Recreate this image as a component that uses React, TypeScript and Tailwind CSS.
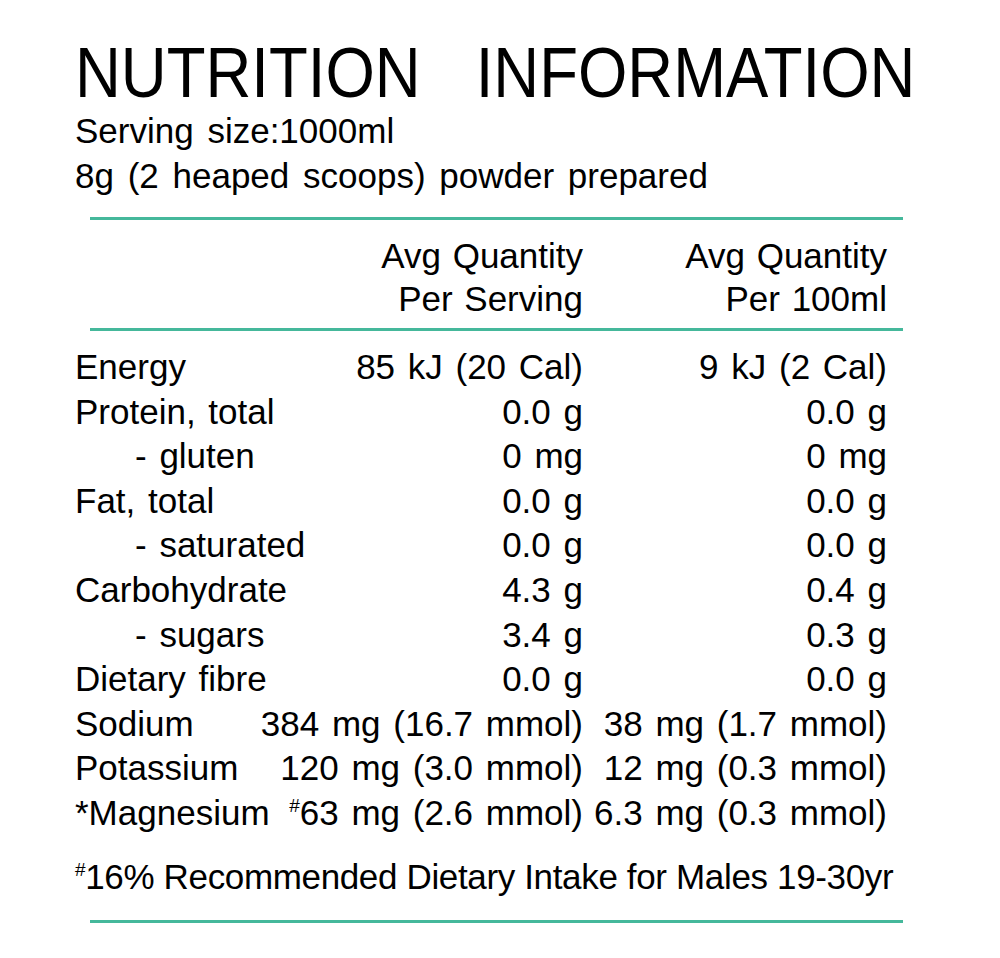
const rows: { label: string; sub?: boolean; serving: React.ReactNode; per100: string }[] = [
  { label: 'Energy', serving: '85 kJ (20 Cal)', per100: '9 kJ (2 Cal)' },
  { label: 'Protein, total', serving: '0.0 g', per100: '0.0 g' },
  { label: '- gluten', sub: true, serving: '0 mg', per100: '0 mg' },
  { label: 'Fat, total', serving: '0.0 g', per100: '0.0 g' },
  { label: '- saturated', sub: true, serving: '0.0 g', per100: '0.0 g' },
  { label: 'Carbohydrate', serving: '4.3 g', per100: '0.4 g' },
  { label: '- sugars', sub: true, serving: '3.4 g', per100: '0.3 g' },
  { label: 'Dietary fibre', serving: '0.0 g', per100: '0.0 g' },
  { label: 'Sodium', serving: '384 mg (16.7 mmol)', per100: '38 mg (1.7 mmol)' },
  { label: 'Potassium', serving: '120 mg (3.0 mmol)', per100: '12 mg (0.3 mmol)' },
  {
    label: '*Magnesium',
    serving: (
      <>
        <span className="relative -top-[13px] text-[19px] leading-none">#</span>63 mg (2.6 mmol)
      </>
    ),
    per100: '6.3 mg (0.3 mmol)',
  },
];

const Rule = ({ className = '' }: { className?: string }) => <div className={`ml-[90px] h-[3px] w-[813px] bg-[#45b89b] ${className}`} />;

export default function App() {
  return (
    <div className="h-[958px] w-[1000px] overflow-hidden bg-white pt-[45px] text-black" style={{ fontFamily: '"Liberation Sans", Arial, sans-serif' }}>
      {/* title */}
      <div className="flex gap-[55px] pl-[75px] text-[63.5px] leading-[63px]">
        <span className="inline-block origin-bottom scale-y-110">NUTRITION</span>
        <span className="inline-block origin-bottom scale-y-110">INFORMATION</span>
      </div>

      <div className="pl-[75px] text-[35px] leading-[45px] [word-spacing:4px]">
        <div>Serving size:1000ml</div>
        <div>8g (2 heaped scoops) powder prepared</div>
      </div>

      <Rule className="mt-[19px]" />

      {/* column headers */}
      <div className="mt-[14px] grid grid-cols-[183px_325px_304px] pl-[75px] text-[35px] leading-[43px] [word-spacing:2px]">
        <div />
        <div className="text-right">
          Avg Quantity
          <br />
          Per Serving
        </div>
        <div className="text-right">
          Avg Quantity
          <br />
          Per 100ml
        </div>
      </div>

      <Rule className="mt-[8px]" />

      {/* nutrients */}
      <div className="mt-[14px] grid grid-cols-[183px_325px_304px] pl-[75px] text-[35px] leading-[44.6px] [word-spacing:3px]">
        {rows.map(r => (
          <div key={r.label} className="contents">
            <div className={`whitespace-nowrap ${r.sub ? 'pl-[60px]' : ''}`}>{r.label}</div>
            <div className="whitespace-nowrap text-right">{r.serving}</div>
            <div className="whitespace-nowrap text-right">{r.per100}</div>
          </div>
        ))}
      </div>

      <div className="mt-[19px] whitespace-nowrap pl-[75px] text-[35px] leading-[44.6px] tracking-[-0.35px]">
        <span className="relative -top-[13px] text-[19px] leading-none">#</span>16% Recommended Dietary Intake for Males 19-30yr
      </div>

      <Rule className="mt-[21px]" />
    </div>
  );
}
